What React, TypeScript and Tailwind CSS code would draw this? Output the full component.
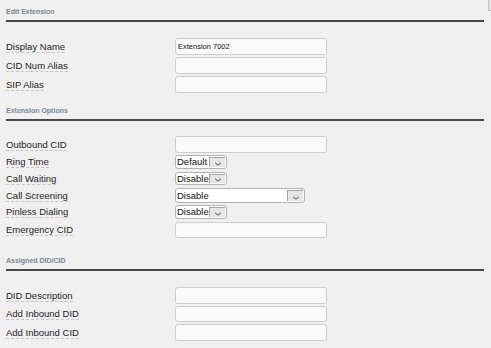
import React from "react";

const Header = ({ title, className = "" }: { title: string; className?: string }) => (
  <div className={className}>
    <div className="h-[20px] flex items-end pb-[4px] text-[7px] leading-[8px] font-bold text-[#7b8694]">
      {title}
    </div>
    <div className="h-[2px] bg-[#474747]" />
  </div>
);

const Label = ({ children }: { children: React.ReactNode }) => (
  <div className="w-[169px] shrink-0 flex items-center">
    <span className="border-b border-dashed border-[#c4c4c4] text-[9.5px] leading-[11px] text-[#1c1c1c]">
      {children}
    </span>
  </div>
);

const TextInput = ({ value = "", h = 17 }: { value?: string; h?: number }) => (
  <input
    readOnly
    defaultValue={value}
    style={{ height: h }}
    className="w-[152px] bg-[#fafafa] border border-[#cdcdcd] rounded-[3px] text-[7.5px] pl-[2px] text-[#111] outline-none"
  />
);

const Select = ({ value, w, h }: { value: string; w: number; h: number }) => (
  <div
    style={{ width: w, height: h }}
    className="flex bg-white border border-[#b3b3b3] rounded-[3px] overflow-hidden"
  >
    <span className="flex-1 pl-[1px] text-[9.5px] leading-none flex items-center text-[#111]">{value}</span>
    <div className="w-[16px] my-[1px] mr-[1px] border-t border-l border-[#a3a3a3] bg-[#e6e6e6] flex items-end justify-center pb-[1px]">
      <svg width="8" height="4" viewBox="0 0 8 4">
        <polyline points="1,0.8 4,3.2 7,0.8" fill="none" stroke="#555" strokeWidth="1" />
      </svg>
    </div>
  </div>
);

const Row = ({ label, children, h, mb = 0 }: { label: string; children: React.ReactNode; h: number; mb?: number }) => (
  <div className="flex items-center" style={{ height: h, marginBottom: mb }}>
    <Label>{label}</Label>
    {children}
  </div>
);

export default function App() {
  return (
    <div className="relative min-h-[348px] bg-[#f0f0f0] pl-[6px] pr-[7px] font-['Liberation_Sans',Arial,sans-serif]">
      <div className="absolute right-0 top-0 w-[3px] h-[11px] border-l border-b border-[#c0c0c0] bg-[#e4e4e4]" />

      <Header title="Edit Extension" />
      <div className="mt-[16px]">
        <Row label="Display Name" h={17} mb={2}>
          <TextInput value="Extension 7002" />
        </Row>
        <Row label="CID Num Alias" h={17} mb={2}>
          <TextInput />
        </Row>
        <Row label="SIP Alias" h={17}>
          <TextInput />
        </Row>
      </div>

      <Header title="Extension Options" className="mt-[6px]" />
      <div className="mt-[15px]">
        <Row label="Outbound CID" h={17} mb={2}>
          <TextInput />
        </Row>
        <Row label="Ring Time" h={14} mb={3}>
          <Select value="Default" w={52} h={14} />
        </Row>
        <Row label="Call Waiting" h={13} mb={3}>
          <Select value="Disable" w={52} h={13} />
        </Row>
        <Row label="Call Screening" h={15} mb={2}>
          <Select value="Disable" w={130} h={15} />
        </Row>
        <Row label="Pinless Dialing" h={14} mb={3}>
          <Select value="Disable" w={52} h={14} />
        </Row>
        <Row label="Emergency CID" h={16}>
          <TextInput h={16} />
        </Row>
      </div>

      <Header title="Assigned DID/CID" className="mt-[11px]" />
      <div className="mt-[16px]">
        <Row label="DID Description" h={17} mb={2}>
          <TextInput />
        </Row>
        <Row label="Add Inbound DID" h={16} mb={2}>
          <TextInput h={16} />
        </Row>
        <Row label="Add Inbound CID" h={17}>
          <TextInput />
        </Row>
      </div>
    </div>
  );
}
